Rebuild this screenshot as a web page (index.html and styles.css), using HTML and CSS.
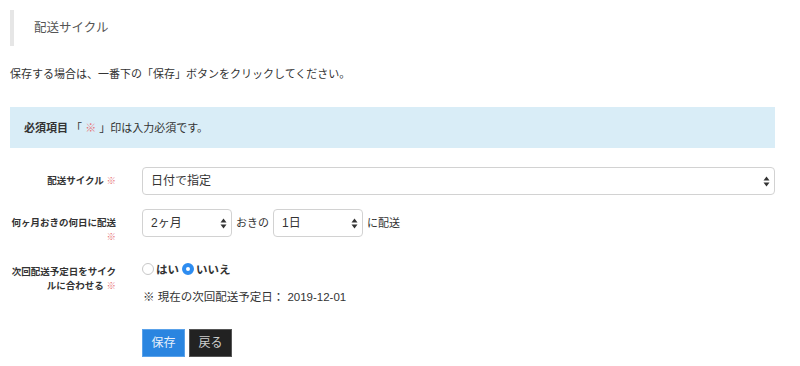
FILE: index.html
```html
<!DOCTYPE html>
<html lang="ja">
<head>
<meta charset="utf-8">
<title>配送サイクル</title>
<link rel="stylesheet" href="styles.css">
</head>
<body>
<div class="page">
  <h1 class="page-title">配送サイクル</h1>
  <p class="lead">保存する場合は、一番下の「保存」ボタンをクリックしてください。</p>
  <div class="notice"><strong>必須項目</strong> 「 <span class="req">※</span> 」印は入力必須です。</div>

  <form class="form">
    <div class="row row-first">
      <div class="label">配送サイクル <span class="req">※</span></div>
      <div class="field">
        <select class="select select-wide"><option>日付で指定</option></select>
      </div>
    </div>
    <div class="row row-second">
      <div class="label">何ヶ月おきの何日に配送 <span class="req">※</span></div>
      <div class="field inline">
        <select class="select select-small"><option>2ヶ月</option></select>
        <span class="inline-text">おきの</span>
        <select class="select select-small"><option>1日</option></select>
        <span class="inline-text">に配送</span>
      </div>
    </div>
    <div class="row row-third">
      <div class="label label-top">次回配送予定日をサイクルに合わせる <span class="req">※</span></div>
      <div class="field">
        <div class="radios">
          <label class="radio"><input type="radio" name="sync"><span>はい</span></label>
          <label class="radio"><input type="radio" name="sync" checked><span>いいえ</span></label>
        </div>
        <p class="note">※ 現在の次回配送予定日： 2019-12-01</p>
      </div>
    </div>
    <div class="row row-actions">
      <div class="label"></div>
      <div class="field buttons">
        <button type="button" class="btn btn-primary">保存</button>
        <button type="button" class="btn btn-dark">戻る</button>
      </div>
    </div>
  </form>
</div>
</body>
</html>
```

FILE: styles.css
```css
* { box-sizing: border-box; }
html, body { margin: 0; padding: 0; background: #fff; }
body {
  font-family: "Liberation Sans", "Noto Sans CJK JP", sans-serif;
  color: #333;
  font-size: 11px;
}
.page { padding: 10px 25px 0 10px; }

.page-title {
  margin: 0;
  height: 36px;
  line-height: 36px;
  border-left: 4px solid #e6e6e6;
  padding-left: 20px;
  font-size: 12.5px;
  font-weight: normal;
  color: #555;
}

.lead {
  margin: 20px 0 0;
  line-height: 16px;
  font-size: 11px;
  color: #333;
}

.notice {
  margin-top: 25px;
  height: 41px;
  background: #d9edf7;
  padding: 0 14px;
  line-height: 42px;
  font-size: 11px;
  color: #333;
}
.notice strong { font-weight: bold; }
.req { color: #e8787c; font-weight: normal; }

.form { margin-top: 19px; }
.row {
  display: grid;
  grid-template-columns: 106px 1fr;
  column-gap: 26px;
}
.row-second { margin-top: 14px; }
.row-third { margin-top: 18px; }
.row-actions { margin-top: 24px; }

.label {
  text-align: right;
  font-weight: bold;
  font-size: 9.5px;
  line-height: 14px;
  padding-top: 7px;
  color: #333;
}
.label-top { padding-top: 3px; }

.select {
  -webkit-appearance: none;
  appearance: none;
  height: 28px;
  border: 1px solid #d2d2d2;
  border-radius: 4px;
  background: #fff url("data:image/svg+xml;utf8,<svg xmlns='http://www.w3.org/2000/svg' width='7' height='11' viewBox='0 0 7 11'><path d='M3.5 0.5 L6.5 4.5 L0.5 4.5 Z' fill='%23333'/><path d='M3.5 10.5 L6.5 6.5 L0.5 6.5 Z' fill='%23333'/></svg>") no-repeat right 4px center;
  font-family: inherit;
  font-size: 12px;
  color: #333;
  padding: 0 20px 0 8px;
  margin: 0;
}
.select-wide { width: 100%; display: block; }
.select-small { width: 90px; }

.inline { display: flex; align-items: flex-start; gap: 4px; }
.inline-text { font-size: 11px; color: #333; line-height: 28px; }

.radios {
  display: flex;
  align-items: center;
  height: 14px;
  font-weight: bold;
  font-size: 11.5px;
}
.radio { display: flex; align-items: center; gap: 2px; margin-right: 3px; }
.radio input {
  -webkit-appearance: none;
  appearance: none;
  width: 12px;
  height: 12px;
  margin: 0;
  border: 1px solid #c8c8c8;
  border-radius: 50%;
  background: #fff;
}
.radio input:checked {
  border: 4px solid #2d8cf0;
  background: #fff;
}

.note {
  margin: 13px 0 0 1px;
  line-height: 16px;
  font-size: 11.5px;
  color: #333;
}

.buttons { display: flex; gap: 4px; }
.btn {
  height: 28px;
  border: 1px solid transparent;
  font-family: inherit;
  font-size: 12px;
  line-height: 26px;
  cursor: pointer;
  width: 43px;
  padding: 0;
}
.btn-primary { background: #2a85e0; border-color: #5aa2ea; color: #e6f0fb; }
.btn-dark { background: #222; border-color: #555; color: #cfcfcf; }
```
